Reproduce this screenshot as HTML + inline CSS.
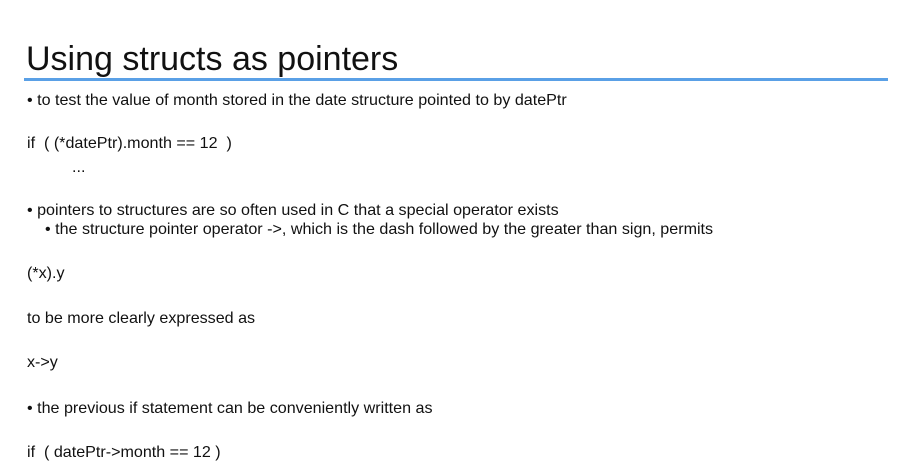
<!DOCTYPE html>
<html><head><style>
body{margin:0;width:920px;height:466px;background:#fff;position:relative;overflow:hidden;font-family:"Liberation Sans",Arial,sans-serif;color:#111}
.t{position:absolute;white-space:nowrap;font-size:16.1px;line-height:18px}
h1{position:absolute;left:26px;top:39px;margin:0;font-weight:normal;font-size:34px;line-height:40px;color:#111}
.line{position:absolute;left:24px;top:78px;width:864px;height:3px;background:#5aa0e6}
</style></head><body>
<h1>Using structs as pointers</h1>
<div class="line"></div>
<div class="t" style="left:27px;top:91px">• to test the value of month stored in the date structure pointed to by datePtr</div>
<div class="t" style="left:27px;top:134px">if &nbsp;( (*datePtr).month == 12 &nbsp;)</div>
<div class="t" style="left:72px;top:158px">...</div>
<div class="t" style="left:27px;top:201px">• pointers to structures are so often used in C that a special operator exists</div>
<div class="t" style="left:45px;top:220px">• the structure pointer operator -&gt;, which is the dash followed by the greater than sign, permits</div>
<div class="t" style="left:27px;top:264px">(*x).y</div>
<div class="t" style="left:27px;top:309px">to be more clearly expressed as</div>
<div class="t" style="left:27px;top:353px">x-&gt;y</div>
<div class="t" style="left:27px;top:399px">• the previous if statement can be conveniently written as</div>
<div class="t" style="left:27px;top:443px">if &nbsp;( datePtr-&gt;month == 12 )</div>
</body></html>
